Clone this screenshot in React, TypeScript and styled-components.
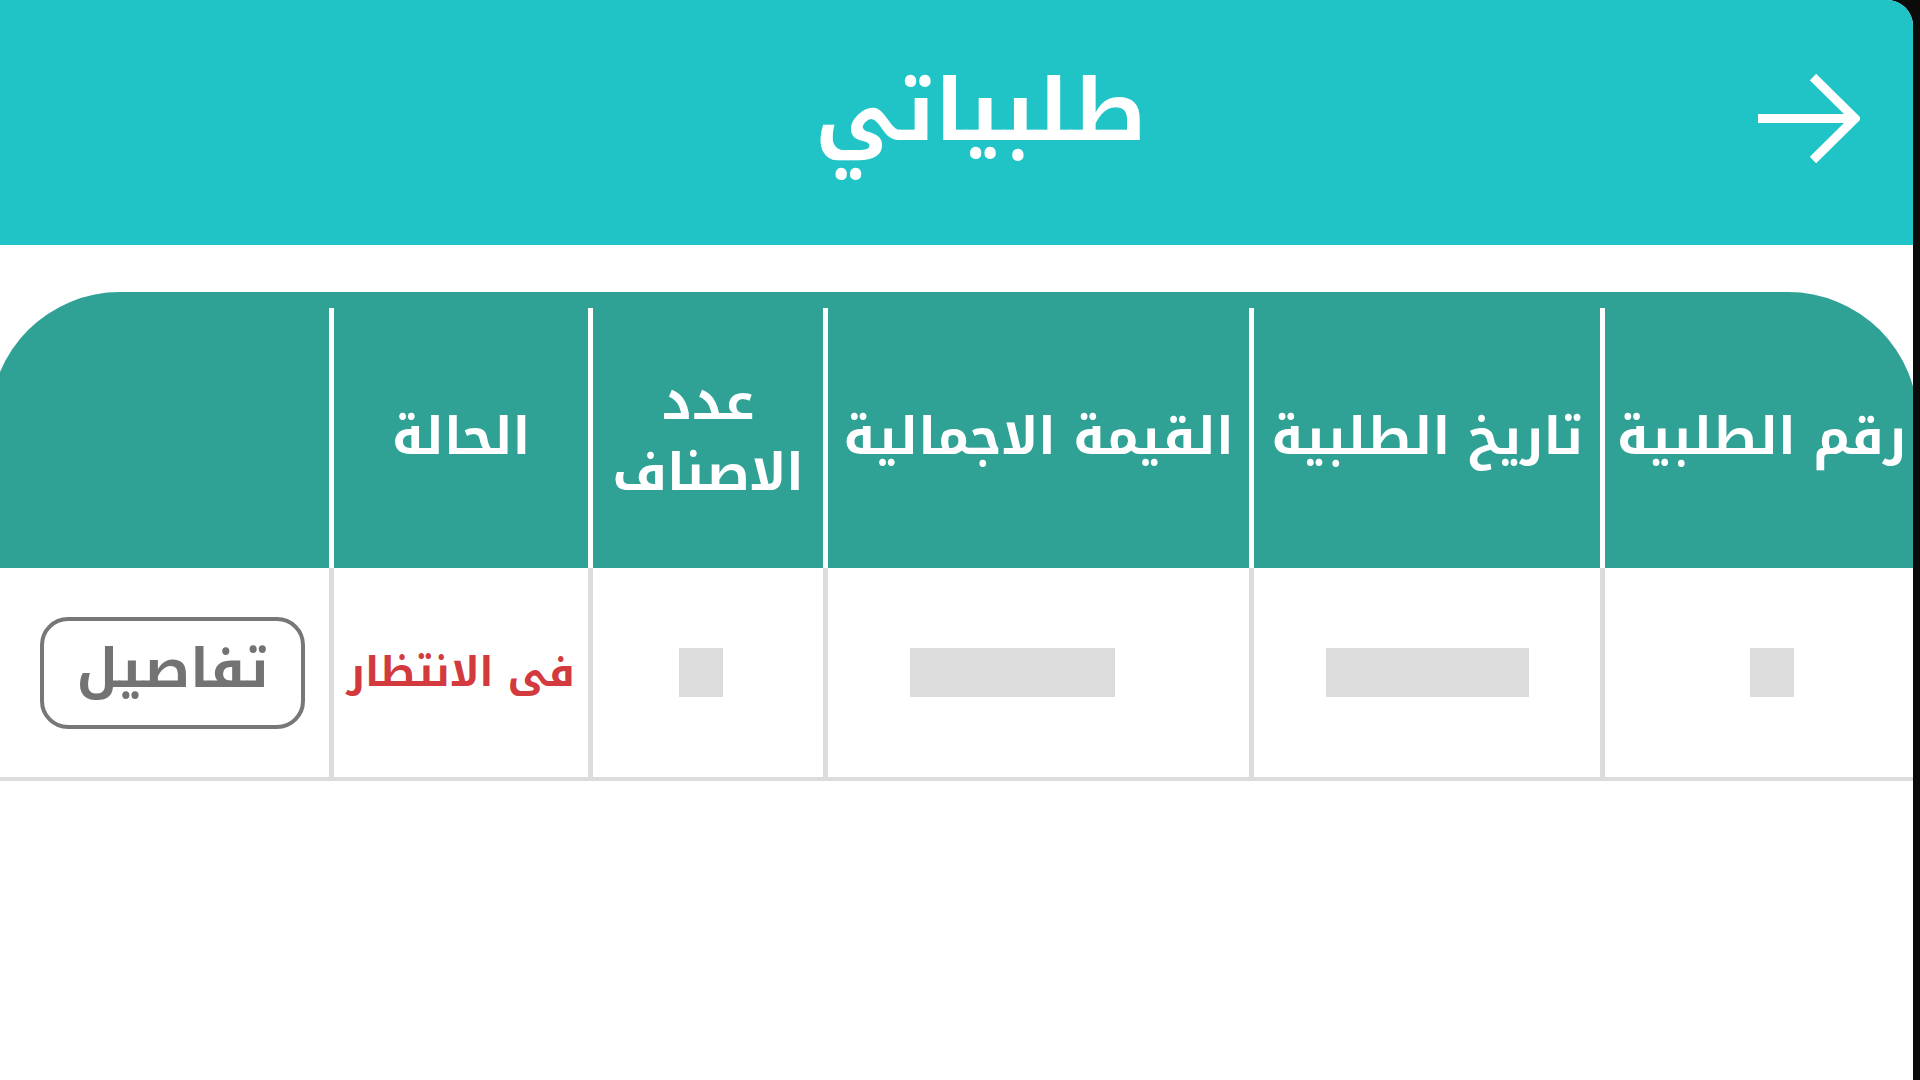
import React from "react";
import styled, { createGlobalStyle } from "styled-components";

const GlobalStyle = createGlobalStyle`
  html, body {
    margin: 0;
    padding: 0;
    background: #0b0b0c;
    overflow: hidden;
  }
  * { box-sizing: border-box; }
`;

const FONT = `"Noto Kufi Arabic", "Noto Sans Arabic", "DejaVu Sans", "Noto Sans", sans-serif`;

const Screen = styled.div`
  width: 1913px;
  height: 1080px;
  background: #ffffff;
  border-top-right-radius: 26px;
  overflow: hidden;
  direction: rtl;
  font-family: ${FONT};
  display: flex;
  flex-direction: column;
`;

const TopBar = styled.header`
  height: 245px;
  background: #20c4c6;
  display: grid;
  grid-template-columns: 1fr auto 1fr;
  align-items: center;
  flex-shrink: 0;
`;

const BackButton = styled.button`
  justify-self: start;
  margin-right: 52px;
  margin-bottom: 8px;
  width: 104px;
  height: 92px;
  padding: 0;
  border: 0;
  background: transparent;
  display: flex;
  align-items: center;
  justify-content: center;
  cursor: pointer;
`;

const Title = styled.h1`
  margin: 0 0 22px;
  padding-left: 48px;
  color: #ffffff;
  font-size: 85px;
  font-weight: 700;
  line-height: 1;
`;

const TableWrap = styled.div`
  margin-top: 47px;
  margin-right: -5px;
  width: 1928px;
  flex-shrink: 0;
`;

const Row = styled.div`
  display: grid;
  grid-template-columns: 318px 351px 426px 235px 259px 339px;
`;

const HeadRow = styled(Row)`
  background: #2fa295;
  border-top-left-radius: 130px;
  border-top-right-radius: 130px;
  padding-top: 16px;
`;

const BodyRow = styled(Row)`
  border-bottom: 4px solid #dcdcdc;
`;

const HeadCell = styled.div<{ $last?: boolean }>`
  height: 260px;
  border-left: ${(p) => (p.$last ? "0" : "5px solid #ffffff")};
  display: flex;
  align-items: center;
  justify-content: center;
  text-align: center;
  color: #ffffff;
  font-size: 51px;
  font-weight: 700;
  line-height: 1.4;
  white-space: nowrap;
`;

const BodyCell = styled.div<{ $last?: boolean; $shift?: number }>`
  height: 209px;
  border-left: ${(p) => (p.$last ? "0" : "5px solid #dcdcdc")};
  display: flex;
  align-items: center;
  justify-content: center;
  padding-left: ${(p) => p.$shift ?? 0}px;
`;

const Placeholder = styled.div<{ $w: number; $dx?: number }>`
  width: ${(p) => p.$w}px;
  height: 49px;
  background: #dcdcdc;
  margin-left: ${(p) => Math.max(0, (p.$dx ?? 0) * 2)}px;
  margin-right: ${(p) => Math.max(0, -(p.$dx ?? 0) * 2)}px;
`;

const Status = styled.span`
  color: #d23a3e;
  font-size: 41px;
  font-weight: 700;
  line-height: 1;
  white-space: nowrap;
`;

const DetailsButton = styled.button`
  width: 265px;
  height: 112px;
  border: 4px solid #777777;
  border-radius: 28px;
  background: #ffffff;
  color: #737373;
  font-family: ${FONT};
  font-size: 54px;
  font-weight: 700;
  line-height: 1;
  padding: 0 0 8px;
  cursor: pointer;
`;

const ArrowIcon = () => (
  <svg width="102" height="90" viewBox="0 0 102 90" fill="none">
    <path d="M0 44.5 H96" stroke="#ffffff" strokeWidth="9" />
    <path d="M55 3 L97 44.5 L55 86" stroke="#ffffff" strokeWidth="9" strokeLinejoin="miter" />
  </svg>
);

const headers: React.ReactNode[] = [
  "رقم الطلبية",
  "تاريخ الطلبية",
  "القيمة الاجمالية",
  <>
    عدد
    <br />
    الاصناف
  </>,
  "الحالة",
  "",
];

export default function App() {
  return (
    <>
      <GlobalStyle />
      <Screen>
        <TopBar>
          <BackButton aria-label="رجوع">
            <ArrowIcon />
          </BackButton>
          <Title>طلبياتي</Title>
          <div />
        </TopBar>
        <TableWrap>
          <HeadRow>
            {headers.map((h, i) => (
              <HeadCell key={i} $last={i === headers.length - 1}>
                {h}
              </HeadCell>
            ))}
          </HeadRow>
          <BodyRow>
            <BodyCell>
              <Placeholder $w={44} $dx={10} />
            </BodyCell>
            <BodyCell>
              <Placeholder $w={203} />
            </BodyCell>
            <BodyCell>
              <Placeholder $w={205} $dx={-26} />
            </BodyCell>
            <BodyCell>
              <Placeholder $w={44} $dx={-7} />
            </BodyCell>
            <BodyCell>
              <Status>فى الانتظار</Status>
            </BodyCell>
            <BodyCell $last $shift={26}>
              <DetailsButton>تفاصيل</DetailsButton>
            </BodyCell>
          </BodyRow>
        </TableWrap>
      </Screen>
    </>
  );
}
